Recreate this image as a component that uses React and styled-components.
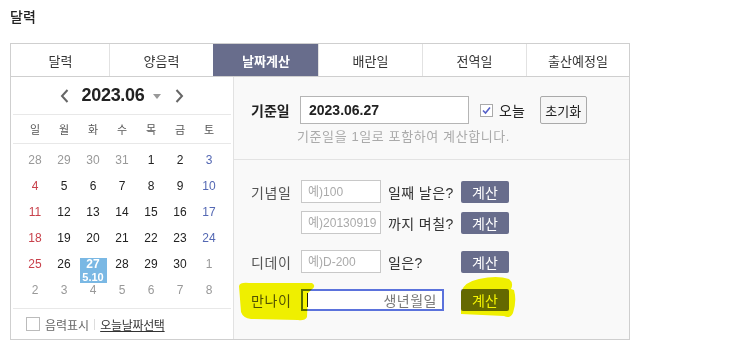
import React from 'react'
import styled, {createGlobalStyle} from 'styled-components'

const GlobalStyle = createGlobalStyle`
  body {
    margin: 0;
    background: #fff;
    font-family: "Liberation Sans", "Noto Sans CJK KR", sans-serif;
    color: #222;
  }
`

const Page = styled.div`
  padding: 7px 0 0 10px;
`

const Title = styled.h2`
  margin: 0 0 16px;
  font-size: 14px;
  line-height: 20px;
  font-weight: 500;
  color: #222;
`

const Frame = styled.div`
  width: 618px;
  border: 1px solid #cfcfcf;
`

const TabBar = styled.div`
  display: grid;
  grid-template-columns: 98px 104px 105px 104px 104px 1fr;
  height: 32px;
  border-bottom: 1px solid #cfcfcf;
`

const Tab = styled.div`
  display: flex;
  align-items: center;
  justify-content: center;
  font-size: 13px;
  color: ${({active}) => (active ? '#fff' : '#333')};
  font-weight: ${({active}) => (active ? 700 : 400)};
  background: ${({active}) => (active ? '#686d8c' : '#fff')};
  border-left: 1px solid ${({active, first}) => (first ? 'transparent' : active ? '#686d8c' : '#e2e2e2')};
`

const Body = styled.div`
  display: flex;
  height: 262px;
`

const Calendar = styled.div`
  width: 222px;
  border-right: 1px solid #e2e2e2;
  display: flex;
  flex-direction: column;
`

const Nav = styled.div`
  height: 37px;
  display: flex;
  align-items: center;
  justify-content: center;
  margin: 0 2px;
  border-bottom: 1px solid #e8e8e8;
`

const Month = styled.div`
  display: flex;
  align-items: center;
  gap: 9px;
  font-size: 18px;
  font-weight: 700;
  letter-spacing: -0.3px;
  color: #222;
  margin: 0 13px 0 12px;
`

const Caret = styled.span`
  width: 0;
  height: 0;
  border-left: 4px solid transparent;
  border-right: 4px solid transparent;
  border-top: 5px solid #999;
  margin-top: 2px;
`

const Week = styled.div`
  display: grid;
  grid-template-columns: repeat(7, 29px);
  justify-content: center;
  height: 28px;
  align-items: center;
  margin: 0 2px;
  border-bottom: 1px solid #e8e8e8;
  font-size: 11px;
  color: #555;
  text-align: center;
`

const Grid = styled.div`
  display: grid;
  grid-template-columns: repeat(7, 29px);
  grid-auto-rows: 26px;
  justify-content: center;
  padding: 3px 0 5px;
`

const Cell = styled.div`
  display: flex;
  justify-content: center;
  padding-top: 7px;
  font-size: 12px;
  line-height: 12px;
  color: ${({tone}) =>
    tone === 'off' ? '#999' : tone === 'sun' ? '#c8414b' : tone === 'sat' ? '#5468b3' : '#222'};
`

const Today = styled.div`
  width: 27px;
  height: 25px;
  background: #7ab8e4;
  color: #fff;
  display: flex;
  flex-direction: column;
  align-items: center;
  font-weight: 700;
  line-height: 12px;
  span {
    font-size: 11px;
    font-weight: 700;
    line-height: 12px;
    margin-top: 1px;
  }
`

const Footer = styled.div`
  flex: 1;
  margin: 0 2px;
  border-top: 1px solid #e8e8e8;
  display: flex;
  align-items: center;
  padding-left: 13px;
  font-size: 12px;
  color: #666;
`

const Box = styled.span`
  width: 12px;
  height: 12px;
  border: 1px solid #bbb;
  background: #fff;
  margin-right: 5px;
`

const Bar = styled.span`
  width: 1px;
  height: 11px;
  background: #ddd;
  margin: 0 5px;
`

const Link = styled.span`
  color: #333;
  text-decoration: underline;
  letter-spacing: -0.3px;
`

const Calc = styled.div`
  flex: 1;
  position: relative;
  background: #f9f9f9;
  display: flex;
  flex-direction: column;
`

const Top = styled.div`
  height: 83px;
  border-bottom: 1px solid #e3e3e3;
  padding: 19px 0 0 17px;
  box-sizing: border-box;
`

const BaseRow = styled.div`
  display: flex;
  align-items: center;
  height: 28px;
`

const Label = styled.span`
  width: ${({w}) => w || 49}px;
  font-size: 14px;
  letter-spacing: ${({bold}) => (bold ? 0 : 0.6)}px;
  font-weight: ${({bold}) => (bold ? 700 : 400)};
  color: ${({bold}) => (bold ? '#222' : '#555')};
`

const DateInput = styled.div`
  width: 159px;
  height: 26px;
  border: 1px solid #b5b5b5;
  background: #fff;
  display: flex;
  align-items: center;
  padding-left: 8px;
  font-size: 14px;
  font-weight: 700;
  color: #222;
`

const Check = styled.span`
  width: 11px;
  height: 11px;
  border: 1px solid #aaa;
  background: #fff;
  margin: 0 6px 0 11px;
  display: flex;
  align-items: center;
  justify-content: center;
`

const Today2 = styled.span`
  font-size: 14px;
  color: #222;
  margin-right: 15px;
`

const Reset = styled.div`
  width: 45px;
  height: 26px;
  border: 1px solid #aaa;
  border-radius: 2px;
  background: #f6f6f6;
  display: flex;
  align-items: center;
  justify-content: center;
  font-size: 13px;
  color: #222;
`

const Hint = styled.div`
  margin: 5px 0 0 46px;
  font-size: 13px;
  line-height: 16px;
  letter-spacing: 0.6px;
  color: #aaa;
`

const Rows = styled.div`
  padding: 20px 0 0 17px;
  display: grid;
  grid-template-columns: 50px 87px 73px 48px;
  align-items: center;
  row-gap: 8px;
`

const Gap = styled.div`
  grid-column: 1 / -1;
  height: 8px;
  margin-top: -8px;
`

const Input = styled.input`
  width: 80px;
  height: 23px;
  box-sizing: border-box;
  border: 1px solid #c8c8c8;
  background: #fff;
  padding: 0 0 0 6px;
  font-family: inherit;
  font-size: 12px;
  outline: none;
  &::placeholder {
    color: #aaa;
  }
`

const Focus = styled.div`
  grid-column: 2 / 4;
  width: 143px;
  height: 22px;
  box-sizing: border-box;
  border: 2px solid #5b72dc;
  background: #fff;
  display: flex;
  align-items: center;
  justify-content: space-between;
  padding: 0 5px 0 4px;
  font-size: 14px;
  letter-spacing: 0.5px;
  color: #777;
`

const Cursor = styled.span`
  width: 1px;
  height: 14px;
  background: #222;
`

const Text = styled.span`
  font-size: 14px;
  color: #333;
  letter-spacing: 0.4px;
`

const Go = styled.div`
  height: 22px;
  border-radius: 2px;
  background: #686d8c;
  color: #fff;
  font-size: 14px;
  display: flex;
  align-items: center;
  justify-content: center;
  grid-column: 4;
`

const Marker = styled.svg`
  position: absolute;
  left: 0;
  top: 0;
  pointer-events: none;
  mix-blend-mode: multiply;
`

const tabs = ['달력', '양음력', '날짜계산', '배란일', '전역일', '출산예정일']

const weeks = [
  [28, 29, 30, 31, 1, 2, 3],
  [4, 5, 6, 7, 8, 9, 10],
  [11, 12, 13, 14, 15, 16, 17],
  [18, 19, 20, 21, 22, 23, 24],
  [25, 26, 27, 28, 29, 30, 1],
  [2, 3, 4, 5, 6, 7, 8],
]

function toneOf(w, d) {
  if ((w === 0 && d < 4) || w === 5 || (w === 4 && d === 6)) return 'off'
  if (d === 0) return 'sun'
  if (d === 6) return 'sat'
  return 'day'
}

const Chevron = ({dir}) => (
  <svg width="10" height="16" viewBox="0 0 10 16">
    <path
      d={dir === 'left' ? 'M7.5 2 L2 8 L7.5 14' : 'M2.5 2 L8 8 L2.5 14'}
      fill="none"
      stroke="#666"
      strokeWidth="2"
    />
  </svg>
)

export default function App() {
  return (
    <Page>
      <GlobalStyle />
      <Title>달력</Title>
      <Frame>
        <TabBar>
          {tabs.map((t, i) => (
            <Tab key={t} first={i === 0} active={i === 2}>
              {t}
            </Tab>
          ))}
        </TabBar>
        <Body>
          <Calendar>
            <Nav>
              <Chevron dir="left" />
              <Month>
                2023.06
                <Caret />
              </Month>
              <Chevron dir="right" />
            </Nav>
            <Week>
              {['일', '월', '화', '수', '목', '금', '토'].map(d => (
                <span key={d}>{d}</span>
              ))}
            </Week>
            <Grid>
              {weeks.map((row, w) =>
                row.map((n, d) => (
                  <Cell key={w + '-' + d} tone={toneOf(w, d)}>
                    {w === 4 && d === 2 ? (
                      <Today>
                        {n}
                        <span>5.10</span>
                      </Today>
                    ) : (
                      n
                    )}
                  </Cell>
                ))
              )}
            </Grid>
            <Footer>
              <Box />
              음력표시
              <Bar />
              <Link>오늘날짜선택</Link>
            </Footer>
          </Calendar>
          <Calc>
            <Top>
              <BaseRow>
                <Label bold>기준일</Label>
                <DateInput>2023.06.27</DateInput>
                <Check>
                  <svg width="9" height="9" viewBox="0 0 9 9">
                    <path d="M1 4.5 L3.5 7 L8 1.5" fill="none" stroke="#5560c8" strokeWidth="1.6" />
                  </svg>
                </Check>
                <Today2>오늘</Today2>
                <Reset>초기화</Reset>
              </BaseRow>
              <Hint>기준일을 1일로 포함하여 계산합니다.</Hint>
            </Top>
            <Rows>
              <Label>기념일</Label>
              <Input placeholder="예)100" />
              <Text>일째 날은?</Text>
              <Go>계산</Go>

              <span />
              <Input placeholder="예)20130919" />
              <Text>까지 며칠?</Text>
              <Go>계산</Go>

              <Gap />
              <Label>디데이</Label>
              <Input placeholder="예)D-200" />
              <Text>일은?</Text>
              <Go>계산</Go>

              <Gap />
              <Label>만나이</Label>
              <Focus>
                <Cursor />
                생년월일
              </Focus>
              <Go>계산</Go>
            </Rows>
            <Marker width="394" height="262" viewBox="235 77 394 262">
              <path
                d="M240 286 Q241 282 250 283 L313 283 Q318 286 312 290 L309 293 L308 317 Q306 321 299 320 L252 319 Q244 318 242 312 Z"
                fill="#f5f500"
              />
              <path
                d="M462 292 Q465 282 480 279 Q498 275 510 279 Q515 283 512 289 L515 290 Q518 301 514 313 Q511 319 505 316 L462 314 Z"
                fill="#f5f500"
              />
            </Marker>
          </Calc>
        </Body>
      </Frame>
    </Page>
  )
}
